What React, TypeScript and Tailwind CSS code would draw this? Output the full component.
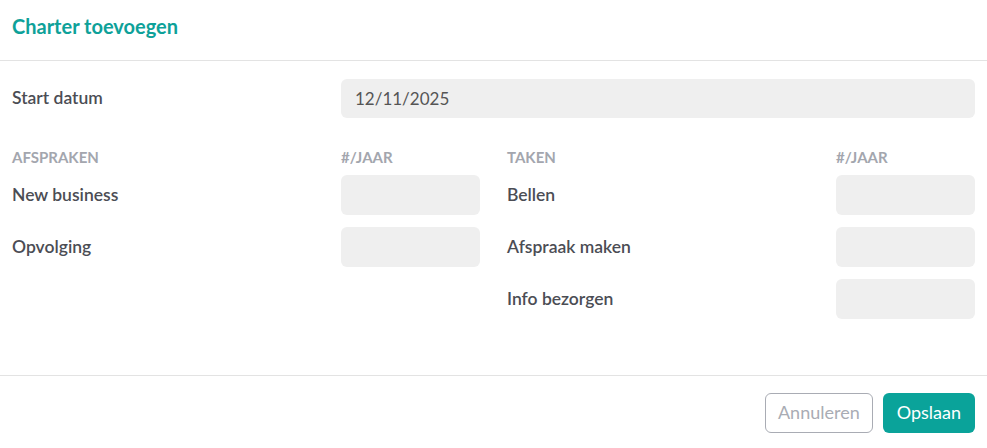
export default function App() {
  const left = ["New business", "Opvolging"];
  const right = ["Bellen", "Afspraak maken", "Info bezorgen"];

  return (
    <div className="w-[987px] h-[448px] bg-white flex flex-col font-['Lato','Liberation_Sans',sans-serif] text-[#4b4d54]">
      {/* Header */}
      <div className="h-[61px] border-b border-[#e3e3e3] flex items-center px-3">
        <h2 className="text-[20px] font-bold text-[#0ea199] leading-none -mt-[8px]">Charter toevoegen</h2>
      </div>

      {/* Body */}
      <div className="flex-1 px-3 pt-[18px] border-b border-[#e3e3e3]">
        <div className="flex items-center">
          <label className="w-[329px] text-[17.5px] font-semibold">Start datum</label>
          <div className="flex-1 h-[39px] rounded-md bg-[#efefef] flex items-center px-[14px] text-[17px] text-[#555]">
            12/11/2025
          </div>
        </div>

        <div className="flex gap-[27px] mt-[31px]">
          <Column title="AFSPRAKEN" rows={left} />
          <Column title="TAKEN" rows={right} />
        </div>
      </div>

      {/* Footer */}
      <div className="h-[72px] flex items-center justify-end gap-[10px] px-3 pt-[1px]">
        <button className="h-[40px] px-[12px] rounded-md border border-[#a9acb4] text-[#a9acb4] text-[18px]">
          Annuleren
        </button>
        <button className="h-[40px] px-[14px] rounded-md bg-[#0aa39a] text-white text-[18px]">
          Opslaan
        </button>
      </div>
    </div>
  );
}

function Column({ title, rows }: { title: string; rows: string[] }) {
  return (
    <div className="w-[468px]">
      <div className="flex text-[15px] font-bold text-[#a3a6ae] leading-4">
        <span className="w-[329px]">{title}</span>
        <span>#/JAAR</span>
      </div>
      <div className="flex flex-col gap-[12px] mt-[10px]">
        {rows.map((r) => (
          <div key={r} className="flex items-center">
            <span className="w-[329px] text-[17.5px] font-semibold">{r}</span>
            <div className="w-[139px] h-[40px] rounded-md bg-[#efefef]" />
          </div>
        ))}
      </div>
    </div>
  );
}
